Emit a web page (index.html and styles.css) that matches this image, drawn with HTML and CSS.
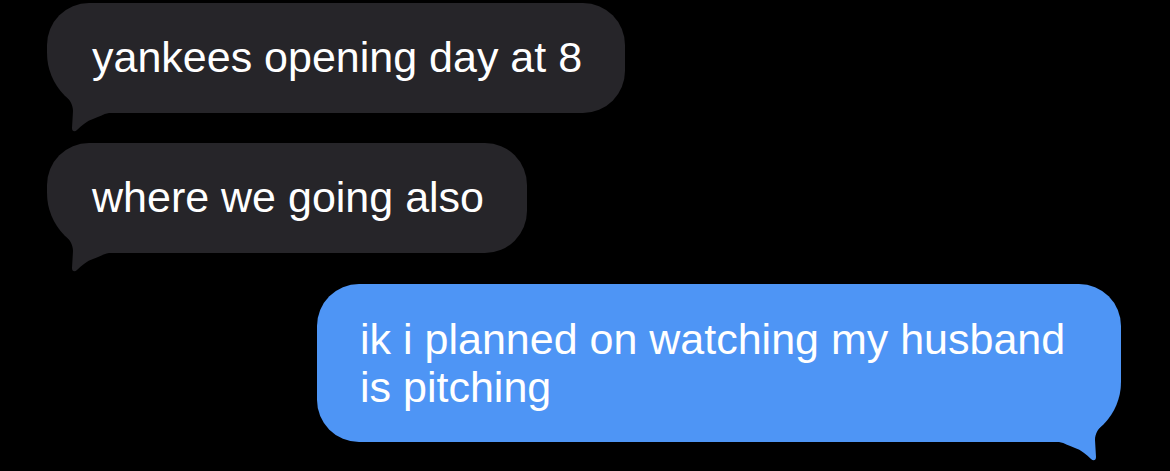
FILE: index.html
```html
<!DOCTYPE html>
<html lang="en">
<head>
    <meta charset="UTF-8">
    <title>Messages</title>
    <link rel="stylesheet" href="styles.css">
</head>
<body>
    <main class="thread">
        <div class="bubble received">
            yankees opening day at 8
            <svg class="tail" viewBox="0 0 70 50" aria-hidden="true"><path d="M19,13 C23,17 26,22 26,28 L25,45 C25,49 28,49 30,47 C35,42 40,38 46,36 C52,34 56,31 62,30 L62,13 Z"/></svg>
        </div>
        <div class="bubble received">
            where we going also
            <svg class="tail" viewBox="0 0 70 50" aria-hidden="true"><path d="M19,13 C23,17 26,22 26,28 L25,45 C25,49 28,49 30,47 C35,42 40,38 46,36 C52,34 56,31 62,30 L62,13 Z"/></svg>
        </div>
        <div class="bubble sent">
            ik i planned on watching my husband is pitching
            <svg class="tail" viewBox="0 0 70 50" aria-hidden="true"><path d="M51,13 C47,17 44,22 44,28 L45,45 C45,49 42,49 40,47 C35,42 30,38 24,36 C18,34 14,31 8,30 L8,13 Z"/></svg>
        </div>
    </main>
</body>
</html>
```

FILE: styles.css
```css
body {
    margin: 0;
    background-color: #000000;
    font-family: "Liberation Sans", Arial, sans-serif;
}

.thread {
    display: flex;
    flex-direction: column;
    align-items: flex-start;
    gap: 30px;
    padding: 3px 49px 28px 47px;
}

.bubble {
    position: relative;
    color: #ffffff;
    font-size: 43px;
    line-height: 48px;
    padding: 30px 43px 32px 45px;
    border-radius: 42px;
}

.bubble .tail {
    position: absolute;
    width: 70px;
    height: 50px;
    bottom: -20px;
    left: 0;
}

.received {
    background-color: #262529;
    border-bottom-left-radius: 60px;
}

.received .tail path {
    fill: #262529;
}

.sent {
    align-self: flex-end;
    box-sizing: border-box;
    width: 804px;
    padding: 31px 40px 31px 43px;
    background-color: #4e95f5;
    border-bottom-right-radius: 60px;
    margin-top: 1px;
}

.sent .tail {
    left: auto;
    right: 0;
}

.sent .tail path {
    fill: #4e95f5;
}
```
